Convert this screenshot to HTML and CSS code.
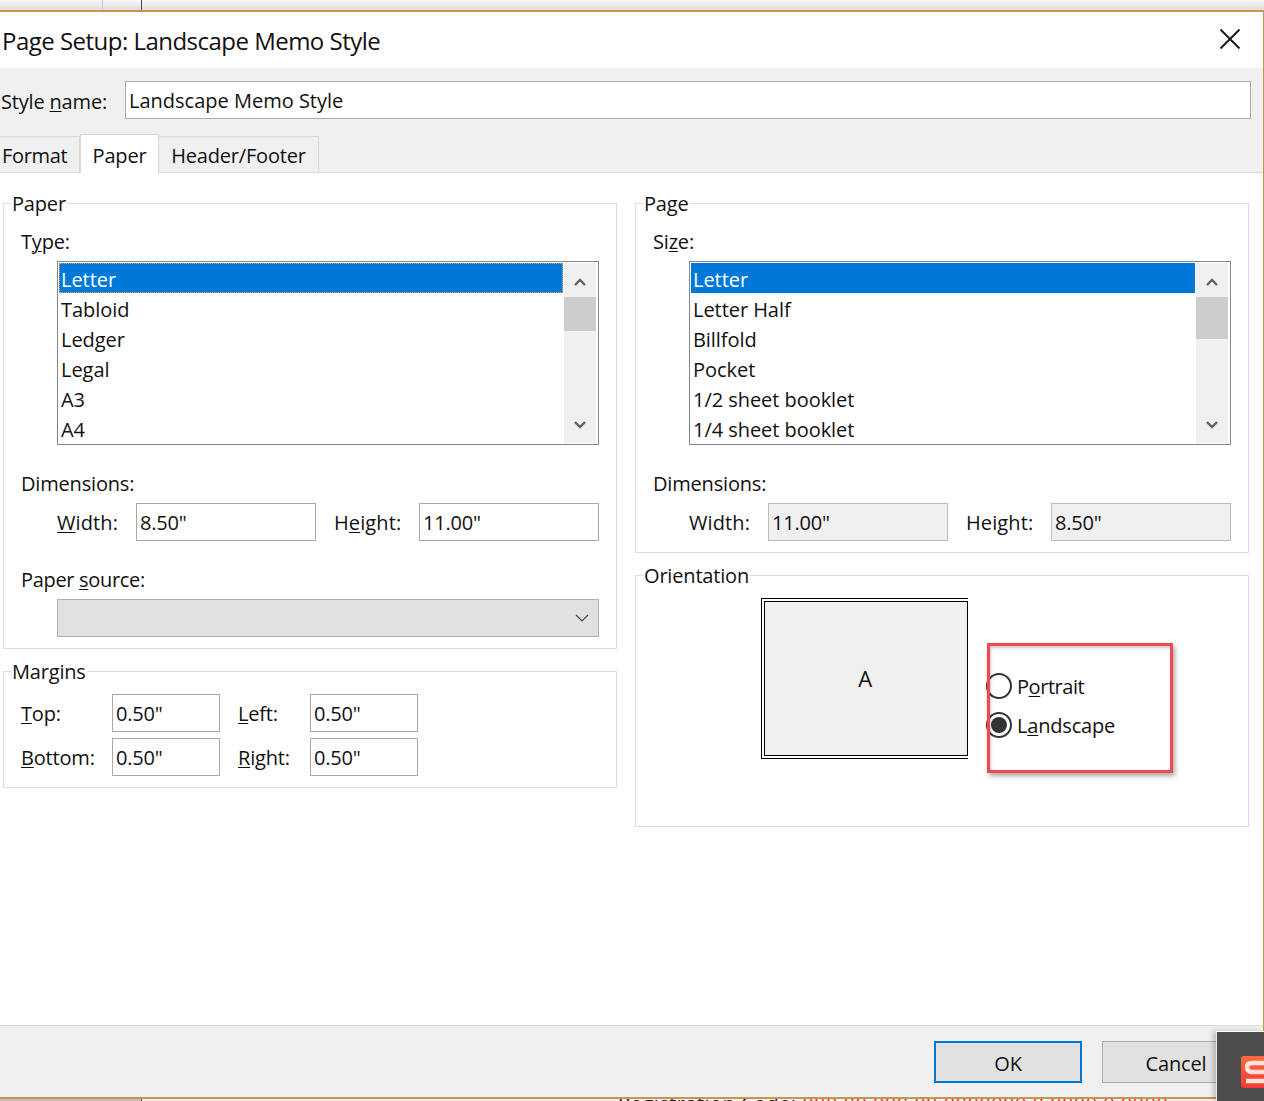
FILE: index.html
```html
<!DOCTYPE html>
<html lang="en">
<head>
<meta charset="utf-8">
<title>Page Setup</title>
<link rel="stylesheet" href="styles.css">
</head>
<body>
<div class="topstrip"><span class="seg seg-a"></span><span class="seg seg-b"></span></div>
<div class="dialog">
  <header class="titlebar">
    <h1 class="title">Page Setup: Landscape Memo Style</h1>
    <svg class="close" width="20" height="20" viewBox="0 0 20 20"><path d="M0.5 0.5L19.5 19.5M19.5 0.5L0.5 19.5" stroke="#1a1a1a" stroke-width="2" fill="none"/></svg>
  </header>
  <div class="namerow">
    <span class="namelabel">Style <u>n</u>ame:</span>
    <div class="field namefield">Landscape Memo Style</div>
  </div>
  <div class="tabs">
    <span class="tab tab-format">Format</span>
    <span class="tab tab-paper">Paper</span>
    <span class="tab tab-header">Header/Footer</span>
  </div>
  <main class="content">
    <div class="col">
      <fieldset class="group group-paper">
        <legend>Paper</legend>
        <div class="lbl lbl-type">T<u>y</u>pe:</div>
        <div class="list">
          <div class="items">
            <div class="item selected focus">Letter</div>
            <div class="item">Tabloid</div>
            <div class="item">Ledger</div>
            <div class="item">Legal</div>
            <div class="item">A3</div>
            <div class="item">A4</div>
          </div>
          <div class="scroll">
            <svg class="arrow" width="12" height="8" viewBox="0 0 12 8"><path d="M1 7L6 2L11 7" stroke="#606060" stroke-width="2.4" fill="none"/></svg>
            <div class="thumb thumb-short"></div>
            <svg class="arrow arrow-down" width="12" height="8" viewBox="0 0 12 8"><path d="M1 1L6 6L11 1" stroke="#606060" stroke-width="2.4" fill="none"/></svg>
          </div>
        </div>
        <div class="lbl lbl-dim">Dimensions:</div>
        <div class="dimrow">
          <span class="dimlabel dim-w"><u>W</u>idth:</span>
          <div class="field dimfield">8.50"</div>
          <span class="dimlabel dim-h">H<u>e</u>ight:</span>
          <div class="field dimfield">11.00"</div>
        </div>
        <div class="lbl lbl-source">Paper <u>s</u>ource:</div>
        <div class="select">
          <svg width="14" height="8" viewBox="0 0 14 8"><path d="M1 1L7 7L13 1" stroke="#444" stroke-width="1.2" fill="none"/></svg>
        </div>
      </fieldset>
      <fieldset class="group group-margins">
        <legend>Margins</legend>
        <div class="margins">
          <span><u>T</u>op:</span><div class="field">0.50"</div><span><u>L</u>eft:</span><div class="field">0.50"</div>
          <span><u>B</u>ottom:</span><div class="field">0.50"</div><span><u>R</u>ight:</span><div class="field">0.50"</div>
        </div>
      </fieldset>
    </div>
    <div class="col">
      <fieldset class="group group-page">
        <legend>Page</legend>
        <div class="lbl lbl-type">Si<u>z</u>e:</div>
        <div class="list">
          <div class="items">
            <div class="item selected">Letter</div>
            <div class="item">Letter Half</div>
            <div class="item">Billfold</div>
            <div class="item">Pocket</div>
            <div class="item">1/2 sheet booklet</div>
            <div class="item">1/4 sheet booklet</div>
          </div>
          <div class="scroll">
            <svg class="arrow" width="12" height="8" viewBox="0 0 12 8"><path d="M1 7L6 2L11 7" stroke="#606060" stroke-width="2.4" fill="none"/></svg>
            <div class="thumb thumb-long"></div>
            <svg class="arrow arrow-down" width="12" height="8" viewBox="0 0 12 8"><path d="M1 1L6 6L11 1" stroke="#606060" stroke-width="2.4" fill="none"/></svg>
          </div>
        </div>
        <div class="lbl lbl-dim">Dimensions:</div>
        <div class="dimrow">
          <span class="dimlabel dim-w2">Width:</span>
          <div class="field dimfield2 disabled">11.00"</div>
          <span class="dimlabel dim-h2">Height:</span>
          <div class="field dimfield2 disabled">8.50"</div>
        </div>
      </fieldset>
      <fieldset class="group group-orient">
        <legend>Orientation</legend>
        <div class="orient">
          <div class="preview"><div class="sheet">A</div></div>
          <div class="radios">
            <div class="radio"><span class="dot"></span><span class="radio-tight">P<u>o</u>rtrait</span></div>
            <div class="radio"><span class="dot checked"></span><span>L<u>a</u>ndscape</span></div>
          </div>
        </div>
        <div class="callout"></div>
      </fieldset>
    </div>
  </main>
  <footer class="footer">
    <div class="btn btn-ok">OK</div>
    <div class="btn">Cancel</div>
  </footer>
</div>
<div class="bottomstrip">
  <span class="tick"></span>
  <span class="clipped">Registration Code: <span class="clipped-red">000 00 000 00 0000000 0 0000 0 0000</span></span>
</div>
<div class="widget">
  <svg class="widget-logo" width="23" height="32" viewBox="0 0 23 32">
    <defs><linearGradient id="logo-fill" x1="0" y1="0" x2="0" y2="1"><stop offset="0" stop-color="#f96a3c"/><stop offset="1" stop-color="#f43a3a"/></linearGradient></defs>
    <rect width="32" height="32" rx="3" fill="url(#logo-fill)"/>
    <path d="M23 7H11Q6 7 6 11Q6 16 11 16H23M5 25H23" stroke="#fde2da" stroke-width="4.5" fill="none"/>
  </svg>
</div>
</body>
</html>
```
FILE: styles.css
```css
* { box-sizing: border-box; }
html, body { margin: 0; padding: 0; }
body {
  width: 1264px;
  height: 1101px;
  overflow: hidden;
  position: relative;
  background: #fff;
  font-family: "Open Sans", "Noto Sans", sans-serif;
  font-size: 20px;
  color: #111;
  letter-spacing: -0.18px;
}
u { text-underline-offset: 2px; text-decoration-thickness: 1px; }

.topstrip {
  height: 10px;
  display: flex;
  background: linear-gradient(#f8f8f8, #dedede);
}
.seg { display: block; height: 10px; }
.seg-a { width: 103px; border-right: 1px solid #c8c8c8; }
.seg-b { width: 39px; border-right: 1px solid #444; }

.dialog {
  height: 1089px;
  border-top: 2px solid #c4964e;
  border-bottom: 2px solid #c4964e;
  border-right: 1px solid #c4964e;
  background: #f0f0f0;
  display: flex;
  flex-direction: column;
}
.titlebar {
  height: 56px;
  flex: none;
  background: #fff;
  display: flex;
  align-items: center;
  justify-content: space-between;
  padding: 0 23px 0 2px;
}
.title { margin: 0; font-size: 24px; font-weight: 400; letter-spacing: -0.52px; }
.close { display: block; margin-bottom: 2px; }

.namerow {
  height: 66px;
  flex: none;
  display: flex;
  align-items: flex-start;
  padding: 13px 12px 0 1px;
}
.namelabel { width: 124px; padding-top: 7px; flex: none; }
.field {
  height: 38px;
  border: 1px solid #a9a9a9;
  background: #fff;
  padding-left: 3px;
  line-height: 37px;
}
.namefield { flex: 1; letter-spacing: 0; }

.tabs {
  height: 39px;
  flex: none;
  display: flex;
  align-items: flex-end;
  border-bottom: 1px solid #d9d9d9;
}
.tab {
  height: 36px;
  border: 1px solid #d9d9d9;
  border-bottom: none;
  line-height: 38px;
  text-align: center;
  background: #f0f0f0;
}
.tab-format { width: 80px; border-left: none; text-align: left; padding-left: 2px; letter-spacing: -0.35px; }
.tab-paper {
  width: 79px;
  height: 39px;
  margin-bottom: -1px;
  background: #fff;
  line-height: 41px;
}
.tab-header { width: 160px; border-left: none; }

.content {
  flex: 1;
  background: #fff;
  display: grid;
  grid-template-columns: 614px 614px;
  column-gap: 18px;
  padding: 19px 0 0 3px;
  align-items: start;
}
.col { display: flex; flex-direction: column; gap: 11px; }
.group {
  margin: 0;
  min-width: 0;
  border: 1px solid #dcdcdc;
  padding: 0;
  position: relative;
}
.group legend {
  margin-left: 7px;
  padding: 0 1px;
  height: 22px;
  line-height: 24px;
}
.group-paper { height: 457px; }
.group-page { height: 361px; }
.group-margins { height: 128px; }
.group-orient { height: 263px; }

.lbl { padding-left: 17px; line-height: 26px; height: 26px; }
.lbl-type { margin-top: 15px; }
.list {
  margin: 6px 17px 0 53px;
  height: 184px;
  border: 1px solid #828790;
  background: #fff;
  padding: 1px 2px 1px 1px;
  display: flex;
  overflow: hidden;
}
.items { flex: 1; min-width: 0; overflow: hidden; height: 180px; letter-spacing: -0.05px; }
.item { height: 30px; line-height: 33px; padding-left: 2px; }
.selected { background: #0078d7; color: #fff; margin-right: 1px; }
.focus { outline: 1px dotted #e8a060; outline-offset: -1px; }
.scroll {
  width: 32px;
  height: 180px;
  flex: none;
  background: #f0f0f0;
  display: flex;
  flex-direction: column;
  align-items: center;
}
.arrow { display: block; margin-top: 15px; flex: none; }
.arrow-down { margin-top: auto; margin-bottom: 14px; }
.thumb { width: 32px; background: #cdcdcd; margin-top: 11px; flex: none; }
.thumb-short { height: 34px; }
.thumb-long { height: 42px; }

.lbl-dim { margin-top: 26px; }
.dimrow {
  display: flex;
  align-items: center;
  height: 38px;
  margin-top: 6px;
}
.dimlabel { flex: none; letter-spacing: 0.1px; }
.dim-w { width: 79px; margin-left: 53px; }
.dim-h { width: 103px; padding-left: 18px; }
.dimfield { width: 180px; flex: none; }
.dim-w2 { width: 79px; margin-left: 53px; }
.dimfield2 { width: 180px; flex: none; }
.dim-h2 { width: 103px; padding-left: 18px; }
.disabled { background: #f0f0f0; border-color: #bcbcbc; }

.lbl-source { margin-top: 26px; letter-spacing: -0.32px; }
.select {
  margin: 6px 17px 0 53px;
  height: 38px;
  background: #e1e1e1;
  border: 1px solid #adadad;
  display: flex;
  align-items: center;
  justify-content: flex-end;
  padding-right: 9px;
}

.margins {
  display: grid;
  grid-template-columns: 91px 108px 90px 108px;
  grid-template-rows: 38px 38px;
  gap: 6px 0;
  padding: 12px 0 0 17px;
  align-items: center;
}
.margins span:nth-of-type(even) { padding-left: 18px; }

.orient { position: relative; height: 230px; }
.preview {
  position: absolute;
  left: 125px;
  top: 12px;
  width: 207px;
  height: 161px;
  border: 1px solid #000;
  border-right: none;
  padding: 2px 0 2px 2px;
}
.sheet {
  height: 100%;
  background: #f0f0f0;
  border: 1px solid #000;
  display: flex;
  align-items: center;
  justify-content: center;
  font-size: 22px;
  padding: 0 2px 1px 0;
}
.radios {
  position: absolute;
  left: 350px;
  top: 87px;
  display: flex;
  flex-direction: column;
  gap: 13px;
}
.radio { display: flex; align-items: center; gap: 5px; height: 26px; }
.radio-tight { letter-spacing: -0.45px; }
.dot {
  width: 26px;
  height: 26px;
  border-radius: 50%;
  border: 2px solid #333;
  background: #fff;
  flex: none;
  position: relative;
}
.checked::after {
  content: "";
  position: absolute;
  inset: 3px;
  border-radius: 50%;
  background: #333;
}
.callout {
  position: absolute;
  left: 351px;
  top: 57px;
  width: 186px;
  height: 130px;
  border: 3px solid #f24a4a;
  box-shadow: 2px 3px 5px rgba(0, 0, 0, 0.35), inset 1px 2px 3px rgba(0, 0, 0, 0.2);
}

.footer {
  height: 72px;
  flex: none;
  border-top: 1px solid #d9d9d9;
  display: flex;
  justify-content: flex-end;
  gap: 20px;
  padding: 15px 13px 0 0;
}
.btn {
  width: 148px;
  height: 42px;
  background: #e1e1e1;
  border: 1px solid #adadad;
  text-align: center;
  line-height: 43px;
}
.btn-ok { border: 2px solid #0078d7; line-height: 41px; }

.bottomstrip {
  height: 2px;
  background: linear-gradient(to right, #c2c2c2 142px, #f2f2f2 142px);
  overflow: hidden;
  position: relative;
}
.tick {
  position: absolute;
  left: 141px;
  top: 0;
  width: 1px;
  height: 2px;
  background: #444;
}
.clipped {
  position: absolute;
  left: 618px;
  top: -5px;
  white-space: nowrap;
  font-size: 20px;
  line-height: 20px;
  letter-spacing: 0.45px;
  color: #222;
}
.clipped-red { color: #d8402f; }
.widget {
  position: absolute;
  right: 0;
  top: 1031px;
  width: 48px;
  height: 70px;
  background: #4d4d4d;
  border-top: 1px solid #fff;
  border-left: 1px solid #e8e8e8;
  box-shadow: -3px 0 5px rgba(0, 0, 0, 0.2);
  overflow: hidden;
}
.widget-logo { position: absolute; left: 24px; top: 24px; }
```
